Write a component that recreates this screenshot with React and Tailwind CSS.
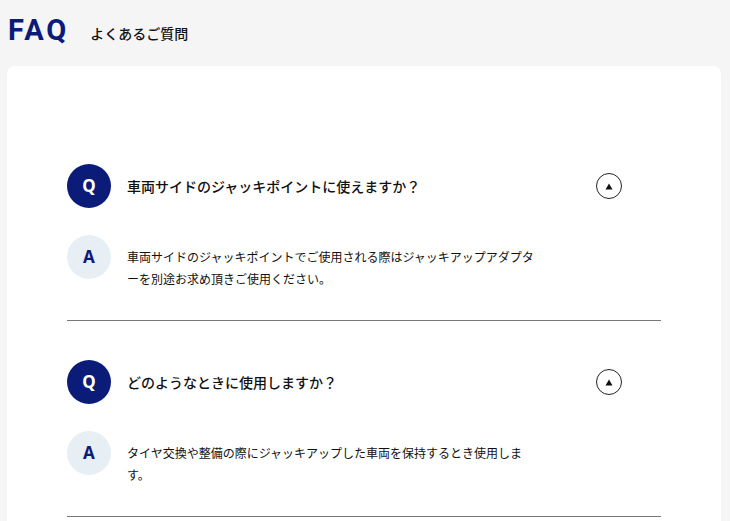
import React from "react";

const faqs = [
    {
        q: "車両サイドのジャッキポイントに使えますか？",
        a: "車両サイドのジャッキポイントでご使用される際はジャッキアップアダプターを別途お求め頂きご使用ください。",
    },
    {
        q: "どのようなときに使用しますか？",
        a: "タイヤ交換や整備の際にジャッキアップした車両を保持するとき使用します。",
    },
];

const font = { fontFamily: '"Noto Sans", "Noto Sans CJK JP", sans-serif' };

const FaqItem = ({ q, a }) => {
    return (
        <div className="border-b border-[#777777] pt-[39px] pb-[29px] first:pt-0">
            <div className="flex items-center">
                <div className="w-11 h-11 rounded-full bg-[#0b1c78] flex items-center justify-center text-white text-[17px] font-bold">
                    Q
                </div>
                <div className="ml-4 flex-1 text-[14px] font-medium text-[#111111]">{q}</div>
                <button className="mr-[39px] w-[26px] h-[26px] rounded-full border border-[#222222] flex items-center justify-center">
                    <svg width="8" height="7" viewBox="0 0 8 7">
                        <path d="M4 0.5 L7.5 6.5 L0.5 6.5 Z" fill="#111111" />
                    </svg>
                </button>
            </div>
            <div className="mt-[27px] flex items-start">
                <div className="w-11 h-11 shrink-0 rounded-full bg-[#e8eff4] flex items-center justify-center text-[#0b1c78] text-[17px] font-bold">
                    A
                </div>
                <p className="ml-4 pt-[12px] w-[412px] text-[12px] leading-[22px] text-[#111111]">{a}</p>
            </div>
        </div>
    );
};

export default function App() {
    return (
        <div className="min-h-screen bg-[#f5f5f5] pl-[7px] pr-[9px]" style={font}>
            <div className="h-[66px] flex items-center pl-px pb-[6px]">
                <h1
                    className="text-[29px] font-bold tracking-[0.1em] text-[#0b1c78] leading-none"
                    style={{ fontFamily: "Roboto, sans-serif" }}
                >
                    FAQ
                </h1>
                <span className="ml-[21px] mt-[6px] text-[14px] font-medium text-[#111111]">よくあるご質問</span>
            </div>
            <div className="bg-white rounded-lg px-[60px] pt-[98px] pb-10">
                {faqs.map((f, i) => (
                    <FaqItem key={i} q={f.q} a={f.a} />
                ))}
            </div>
        </div>
    );
}
